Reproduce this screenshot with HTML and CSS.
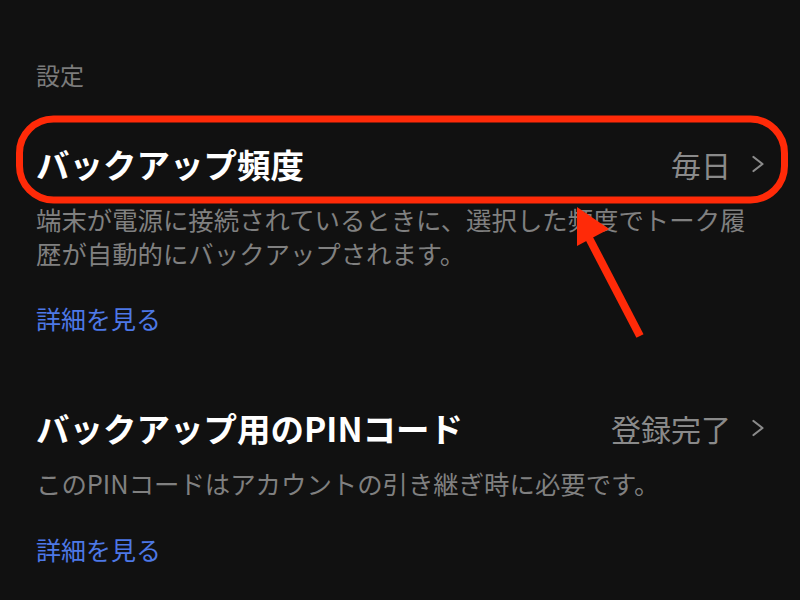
FILE: index.html
```html
<!DOCTYPE html>
<html lang="ja">
<head>
<meta charset="utf-8">
<link rel="stylesheet" href="styles.css">
</head>
<body>
<div class="page">
  <div class="section-label">設定</div>
  <div class="item">
    <div class="row">
      <div class="title">バックアップ頻度</div>
      <div class="value">毎日<svg class="chev" viewBox="0 0 14 18" width="14" height="18"><polyline points="2.5,2 11.5,9 2.5,16" fill="none" stroke="#8a8a8a" stroke-width="2.2" stroke-linecap="round" stroke-linejoin="round"/></svg></div>
    </div>
    <div class="desc">端末が電源に接続されているときに、選択した頻度でトーク履歴が自動的にバックアップされます。</div>
    <div class="link">詳細を見る</div>
  </div>
  <div class="item item-second">
    <div class="row">
      <div class="title">バックアップ用のPINコード</div>
      <div class="value">登録完了<svg class="chev" viewBox="0 0 14 18" width="14" height="18"><polyline points="2.5,2 11.5,9 2.5,16" fill="none" stroke="#8a8a8a" stroke-width="2.2" stroke-linecap="round" stroke-linejoin="round"/></svg></div>
    </div>
    <div class="desc">このPINコードはアカウントの引き継ぎ時に必要です。</div>
    <div class="link">詳細を見る</div>
  </div>
  <svg class="annot" viewBox="0 0 800 600" width="800" height="600">
    <rect x="19.5" y="119" width="765" height="81" rx="34" ry="34" fill="none" stroke="#ff2a08" stroke-width="7"/>
    <line x1="640" y1="336" x2="589" y2="238" stroke="#ff2a08" stroke-width="8"/>
    <polygon points="577,207 577,246 609,229" fill="#ff2a08"/>
  </svg>
</div>
</body>
</html>
```

FILE: styles.css
```css
html, body {
  margin: 0;
  padding: 0;
  background: #111111;
}
body {
  font-family: "Noto Sans CJK JP", "Noto Sans", sans-serif;
  width: 800px;
  height: 600px;
  overflow: hidden;
}
.page {
  position: relative;
  width: 800px;
  height: 600px;
  padding: 60px 35px 0 36px;
  box-sizing: border-box;
}
.section-label {
  font-size: 24px;
  line-height: 30px;
  color: #7c7c7c;
}
.item {
  margin-top: 54px;
}
.item-second {
  margin-top: 75px;
}
.row {
  display: flex;
  align-items: center;
  justify-content: space-between;
  height: 40px;
}
.title {
  font-size: 33.5px;
  line-height: 40px;
  font-weight: 600;
  color: #ffffff;
}
.value {
  display: flex;
  align-items: center;
  gap: 20px;
  font-size: 30px;
  color: #8a8a8a;
  line-height: 40px;
}
.chev {
  display: block;
}
.desc {
  margin-top: 19px;
  padding-right: 8px;
  font-size: 25.4px;
  line-height: 33.5px;
  color: #808080;
}
.link {
  margin-top: 33px;
  font-size: 25px;
  line-height: 30px;
  color: #4d78e6;
}
.annot {
  position: absolute;
  left: 0;
  top: 0;
  pointer-events: none;
}
```
